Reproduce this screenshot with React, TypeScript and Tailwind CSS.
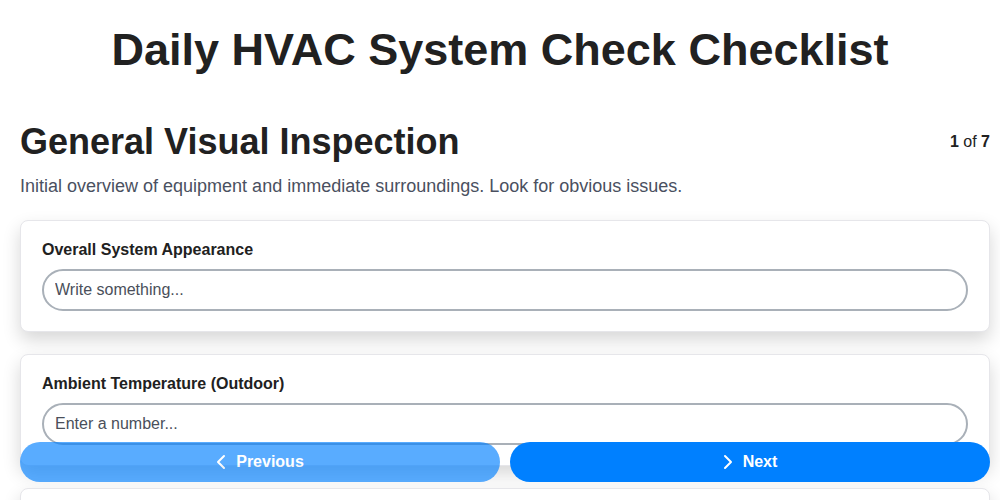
interface Field {
  label: string;
  placeholder: string;
  type: string;
}

const fields: Field[] = [
  { label: 'Overall System Appearance', placeholder: 'Write something...', type: 'text' },
  { label: 'Ambient Temperature (Outdoor)', placeholder: 'Enter a number...', type: 'number' },
  { label: 'Unusual Noises or Vibrations', placeholder: 'Write something...', type: 'text' },
];

function Chevron({ dir }: { dir: 'left' | 'right' }) {
  return (
    <svg width="10" height="16" viewBox="0 0 10 16" fill="none" stroke="currentColor" strokeWidth="2" strokeLinecap="round" strokeLinejoin="round">
      <polyline points={dir === 'left' ? '8,2 2,8 8,14' : '2,2 8,8 2,14'} />
    </svg>
  );
}

function FieldCard({ label, placeholder, type }: Field) {
  return (
    <div className="shrink-0 bg-white border border-[#e6e6ea] rounded-lg shadow-[0_8px_18px_rgba(0,0,0,0.16)] px-[21px] pt-4 pb-5">
      <label className="block text-base leading-6 font-bold text-[#212121] translate-y-px">{label}</label>
      <input
        type={type}
        placeholder={placeholder}
        className="mt-2 block w-full h-[42px] px-[11px] rounded-full border-2 border-[#a9b0b8] bg-white text-base text-[#333] placeholder:text-[#4a4f5a] outline-none"
      />
    </div>
  );
}

export default function App() {
  return (
    <div className="h-screen overflow-hidden bg-white text-[#212121] font-['Liberation_Sans',Arial,sans-serif]">
      <h1 className="pt-[23px] text-[45px] leading-[54px] font-bold text-center text-[#212121]">
        Daily HVAC System Check Checklist
      </h1>

      <div className="pl-5 pr-[10px]">
        <div className="mt-[45px] flex items-start justify-between">
          <h2 className="text-4xl leading-10 font-bold">General Visual Inspection</h2>
          <span className="text-base leading-6 mt-2">
            <span className="font-bold">1</span> of <span className="font-bold">7</span>
          </span>
        </div>
        <p className="mt-[10px] text-lg leading-7 text-[#4a5060]">
          Initial overview of equipment and immediate surroundings. Look for obvious issues.
        </p>

        <div className="mt-5 flex flex-col gap-[22px]">
          {fields.map((f) => (
            <FieldCard key={f.label} {...f} />
          ))}
        </div>
      </div>

      {/* Bottom navigation */}
      <div className="fixed left-5 right-[10px] bottom-[18px] flex gap-[10px]">
        <button
          disabled
          className="flex-1 h-10 rounded-full bg-[#0080ff] opacity-65 text-white font-bold text-base flex items-center justify-center gap-[10px] cursor-not-allowed"
        >
          <Chevron dir="left" />
          Previous
        </button>
        <button className="flex-1 h-10 rounded-full bg-[#0080ff] text-white font-bold text-base flex items-center justify-center gap-[10px]">
          <Chevron dir="right" />
          Next
        </button>
      </div>
    </div>
  );
}
